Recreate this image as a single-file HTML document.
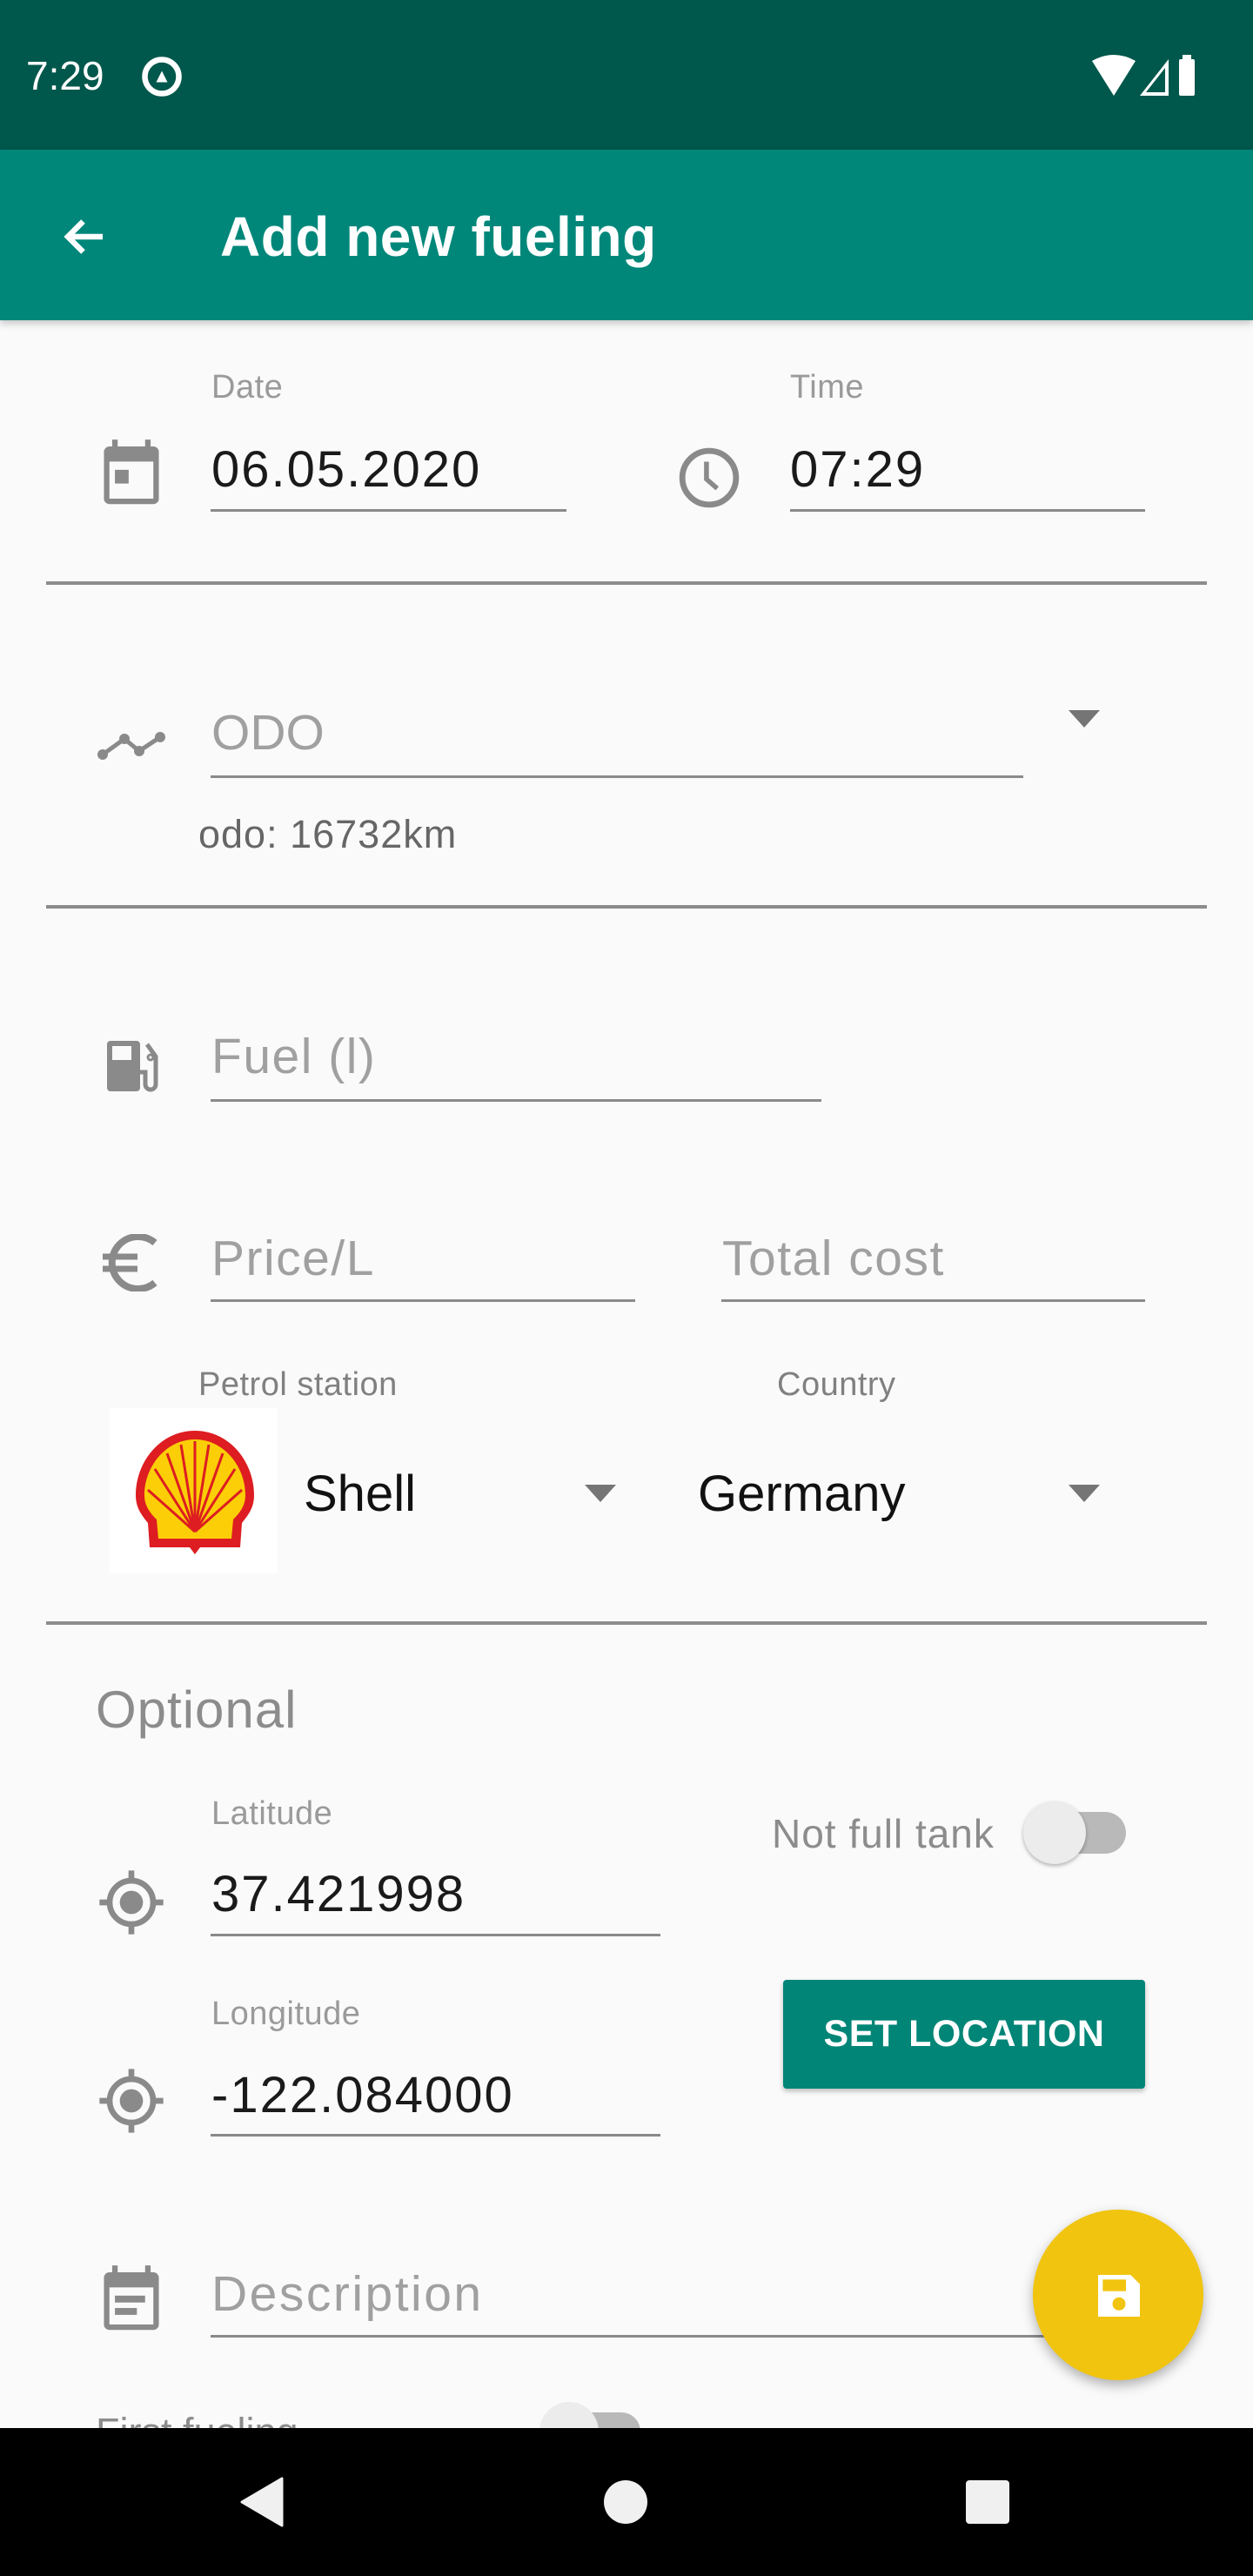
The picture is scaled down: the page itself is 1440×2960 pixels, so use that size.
<!DOCTYPE html>
<html><head><meta charset="utf-8"><style>
*{margin:0;padding:0;box-sizing:border-box}
body{width:1440px;height:2960px;background:#fafafa;font-family:"Liberation Sans",sans-serif;position:relative;overflow:hidden}
.a{position:absolute;white-space:nowrap}
.lbl{font-size:38px;color:#9a9a9a;line-height:38px;letter-spacing:.5px}
.val{font-size:58px;color:#1a1a1a;line-height:58px;letter-spacing:2px}
.ph{font-size:57px;color:#a0a0a0;line-height:57px;letter-spacing:1.5px}
.ul{position:absolute;height:3px;background:#8a8a8a}
.div{position:absolute;left:53px;width:1334px;height:4px;background:#8c8c8c}
.tri{position:absolute;width:0;height:0;border-left:18px solid transparent;border-right:18px solid transparent;border-top:20px solid #757575}
</style></head><body>
<div class="a" style="left:0;top:0;width:1440px;height:172px;background:#00574b"></div>
<div class="a" style="left:30px;top:64px;font-size:46px;line-height:46px;color:#fff">7:29</div>
<svg class="a" style="left:160px;top:62px" width="52" height="52" viewBox="0 0 24 24"><circle cx="12" cy="12" r="9" fill="none" stroke="#fff" stroke-width="3"/><path d="M9 15 L12 9 L15 15 Z" fill="#fff"/></svg>
<svg class="a" style="left:1255px;top:62px" width="125" height="50" viewBox="0 0 125 50"><path d="M0 8 Q25 -6 50 8 L25 48 Z" fill="#fff"/><path d="M55 48 L88 6 L88 48 Z M62 44 L84 44 L84 16 Z" fill="#fff" fill-rule="evenodd"/><rect x="100" y="6" width="18" height="42" rx="2" fill="#fff"/><rect x="104" y="1" width="10" height="6" fill="#fff"/></svg>
<div class="a" style="left:0;top:172px;width:1440px;height:196px;background:#00877a;box-shadow:0 4px 8px rgba(0,0,0,.2)"></div>
<svg class="a" style="left:66px;top:242px" width="64" height="60" viewBox="0 0 24 24"><path d="M20 12H5 M11 5 L4 12 L11 19" fill="none" stroke="#fff" stroke-width="2.6"/></svg>
<div class="a" style="left:253px;top:240px;font-size:64px;line-height:64px;color:#fff;font-weight:bold;letter-spacing:.5px">Add new fueling</div>

<div class="a lbl" style="left:243px;top:426px">Date</div>
<svg class="a" style="left:113px;top:502px" width="76" height="82" viewBox="0 0 24 26"><path d="M6 1v3 M18 1v3" stroke="#8a8a8a" stroke-width="2"/><rect x="2" y="3.5" width="20" height="21" rx="2" fill="#8a8a8a"/><rect x="4" y="9" width="16" height="13.5" fill="#fafafa"/><rect x="6" y="12" width="5" height="5" fill="#8a8a8a"/></svg>
<div class="a val" style="left:243px;top:511px">06.05.2020</div>
<div class="ul" style="left:242px;top:585px;width:409px"></div>
<div class="a lbl" style="left:908px;top:426px">Time</div>
<svg class="a" style="left:778px;top:512px" width="74" height="74" viewBox="0 0 24 24"><circle cx="12" cy="12" r="10" fill="none" stroke="#8a8a8a" stroke-width="2.2"/><path d="M11 6v6.5l4 3.5" fill="none" stroke="#8a8a8a" stroke-width="1.8"/></svg>
<div class="a val" style="left:908px;top:511px">07:29</div>
<div class="ul" style="left:908px;top:585px;width:408px"></div>
<div class="div" style="top:668px"></div>

<svg class="a" style="left:110px;top:822px" width="80" height="62" viewBox="0 0 80 62"><path d="M8 45 L33 27 L50 41 L74 25" fill="none" stroke="#8a8a8a" stroke-width="5"/><circle cx="8" cy="45" r="6" fill="#8a8a8a"/><circle cx="33" cy="27" r="6" fill="#8a8a8a"/><circle cx="50" cy="41" r="6" fill="#8a8a8a"/><circle cx="74" cy="25" r="6" fill="#8a8a8a"/></svg>
<div class="a ph" style="left:243px;top:814px;letter-spacing:0">ODO</div>
<div class="ul" style="left:242px;top:891px;width:934px"></div>
<div class="tri" style="left:1228px;top:816px"></div>
<div class="a" style="left:228px;top:936px;font-size:45px;line-height:45px;color:#666;letter-spacing:1px">odo: 16732km</div>
<div class="div" style="top:1040px"></div>

<svg class="a" style="left:121px;top:1190px" width="64" height="68" viewBox="0 0 64 68"><rect x="2" y="6" width="38" height="58" rx="4" fill="#8a8a8a"/><rect x="8" y="12" width="22" height="16" fill="#fafafa"/><path d="M40 42 h6 v14 a6 6 0 0 0 12 0 V24 L48 10" fill="none" stroke="#8a8a8a" stroke-width="5"/><circle cx="52" cy="25" r="3" fill="none" stroke="#8a8a8a" stroke-width="3"/></svg>
<div class="a ph" style="left:243px;top:1186px">Fuel (l)</div>
<div class="ul" style="left:242px;top:1263px;width:702px"></div>

<svg class="a" style="left:116px;top:1418px" width="70" height="66" viewBox="0 0 70 66"><path d="M62 10 A30 30 0 1 0 62 56" fill="none" stroke="#8a8a8a" stroke-width="8"/><path d="M2 26 H42 M2 40 H42" stroke="#8a8a8a" stroke-width="7"/></svg>
<div class="a ph" style="left:243px;top:1418px">Price/L</div>
<div class="ul" style="left:242px;top:1493px;width:488px"></div>
<div class="a ph" style="left:830px;top:1418px">Total cost</div>
<div class="ul" style="left:829px;top:1493px;width:487px"></div>

<div class="a lbl" style="left:228px;top:1572px;color:#808080">Petrol station</div>
<div class="a lbl" style="left:893px;top:1572px;color:#808080">Country</div>
<div class="a" style="left:126px;top:1618px;width:193px;height:190px;background:#fff"></div>
<svg class="a" style="left:144px;top:1640px" width="160" height="148" viewBox="0 0 160 148"><path d="M80 4 C40 4 12 40 12 78 C12 92 18 100 26 110 L28 138 L74 138 L80 146 L86 138 L132 138 L134 110 C142 100 148 92 148 78 C148 40 120 4 80 4 Z" fill="#dd1d21"/><path d="M80 14 C46 14 22 46 22 78 C22 90 28 98 36 106 L38 128 L122 128 L124 106 C132 98 138 90 138 78 C138 46 114 14 80 14 Z" fill="#fbce07"/><path d="M80 120 L80 16 M80 120 L64 20 M80 120 L96 20 M80 120 L48 30 M80 120 L112 30 M80 120 L34 48 M80 120 L126 48 M80 120 L26 72 M80 120 L134 72" stroke="#dd1d21" stroke-width="3"/></svg>
<div class="a val" style="left:349px;top:1688px;color:#111;letter-spacing:0">Shell</div>
<div class="tri" style="left:672px;top:1706px"></div>
<div class="a val" style="left:802px;top:1688px;color:#111;letter-spacing:0">Germany</div>
<div class="tri" style="left:1228px;top:1706px"></div>
<div class="div" style="top:1863px"></div>

<div class="a" style="left:110px;top:1935px;font-size:60px;line-height:60px;color:#8c8c8c;letter-spacing:1px">Optional</div>
<div class="a lbl" style="left:243px;top:2065px">Latitude</div>
<div class="a" style="left:887px;top:2084px;font-size:46px;line-height:46px;color:#8c8c8c;letter-spacing:1px">Not full tank</div>
<div class="a" style="left:1212px;top:2082px;width:82px;height:48px;border-radius:24px;background:#b9b9b9"></div>
<div class="a" style="left:1176px;top:2070px;width:72px;height:72px;border-radius:50%;background:#ececec;box-shadow:0 2px 5px rgba(0,0,0,.3)"></div>
<svg class="a" style="left:111px;top:2146px" width="80" height="80" viewBox="0 0 24 24"><circle cx="12" cy="12" r="7.5" fill="none" stroke="#8a8a8a" stroke-width="2"/><circle cx="12" cy="12" r="4" fill="#8a8a8a"/><path d="M12 1v3.5 M12 19.5V23 M1 12h3.5 M19.5 12H23" stroke="#8a8a8a" stroke-width="2"/></svg>
<div class="a val" style="left:243px;top:2148px">37.421998</div>
<div class="ul" style="left:242px;top:2222px;width:517px"></div>
<div class="a lbl" style="left:243px;top:2295px">Longitude</div>
<svg class="a" style="left:111px;top:2374px" width="80" height="80" viewBox="0 0 24 24"><circle cx="12" cy="12" r="7.5" fill="none" stroke="#8a8a8a" stroke-width="2"/><circle cx="12" cy="12" r="4" fill="#8a8a8a"/><path d="M12 1v3.5 M12 19.5V23 M1 12h3.5 M19.5 12H23" stroke="#8a8a8a" stroke-width="2"/></svg>
<div class="a val" style="left:243px;top:2379px">-122.084000</div>
<div class="ul" style="left:242px;top:2452px;width:517px"></div>
<div class="a" style="left:900px;top:2275px;width:416px;height:125px;background:#008577;border-radius:4px;box-shadow:0 3px 6px rgba(0,0,0,.25);color:#fff;font-size:43px;font-weight:bold;line-height:125px;text-align:center;letter-spacing:.5px">SET LOCATION</div>

<svg class="a" style="left:113px;top:2600px" width="76" height="82" viewBox="0 0 24 26"><path d="M6 1v3 M18 1v3" stroke="#8a8a8a" stroke-width="2"/><rect x="2" y="3.5" width="20" height="21" rx="2" fill="#8a8a8a"/><rect x="4" y="9" width="16" height="13.5" fill="#fafafa"/><rect x="6" y="12" width="11" height="2.5" fill="#8a8a8a"/><rect x="6" y="16.5" width="8" height="2.5" fill="#8a8a8a"/></svg>
<div class="a ph" style="left:243px;top:2608px;letter-spacing:2.5px">Description</div>
<div class="ul" style="left:242px;top:2683px;width:1000px"></div>
<div class="a" style="left:110px;top:2772px;font-size:45px;line-height:45px;color:#8c8c8c">First fueling</div>
<div class="a" style="left:660px;top:2772px;width:76px;height:44px;border-radius:22px;background:#b9b9b9"></div>
<div class="a" style="left:620px;top:2760px;width:68px;height:68px;border-radius:50%;background:#ececec"></div>
<div class="a" style="left:1187px;top:2539px;width:196px;height:196px;border-radius:50%;background:#f1c40f;box-shadow:0 6px 14px rgba(0,0,0,.3)"></div>
<svg class="a" style="left:1254px;top:2606px" width="64" height="64" viewBox="0 0 24 24"><path d="M3 3h14l4 4v14H3Z" fill="#fff"/><rect x="5" y="5" width="10" height="5" fill="#f1c40f"/><circle cx="12" cy="15.5" r="2.8" fill="#f1c40f"/></svg>

<div class="a" style="left:0;top:2790px;width:1440px;height:170px;background:#000"></div>
<svg class="a" style="left:274px;top:2846px" width="54" height="58" viewBox="0 0 54 58"><path d="M50 2 V56 L4 29 Z" fill="#f0f0f0" stroke="#f0f0f0" stroke-width="3" stroke-linejoin="round"/></svg>
<div class="a" style="left:694px;top:2850px;width:50px;height:50px;border-radius:50%;background:#f0f0f0"></div>
<div class="a" style="left:1110px;top:2850px;width:50px;height:50px;border-radius:4px;background:#f0f0f0"></div>
</body></html>
